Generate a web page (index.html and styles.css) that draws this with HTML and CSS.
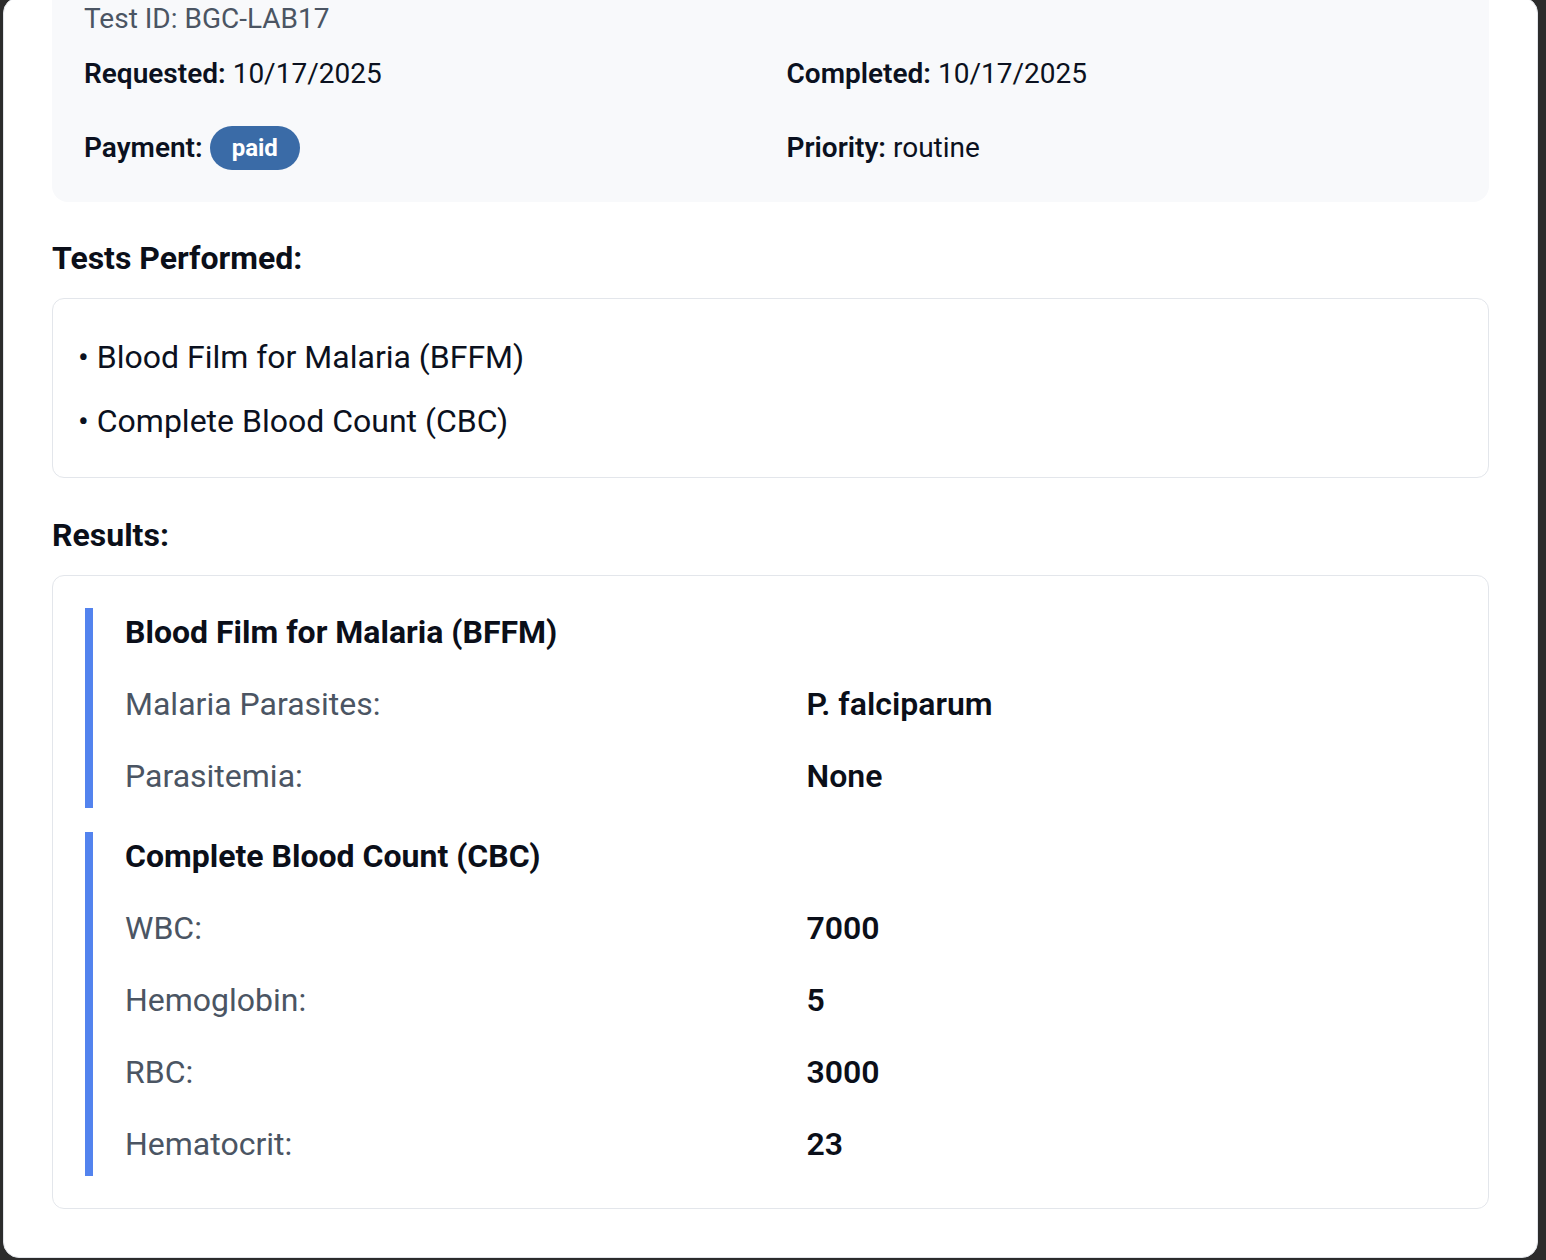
FILE: index.html
```html
<!DOCTYPE html>
<html lang="en">
<head>
<meta charset="utf-8">
<title>Lab Test Details</title>
<link rel="stylesheet" href="styles.css">
</head>
<body>
<div class="modal">
  <div class="modal-scroll">
    <section class="info-box">
      <div class="test-id">Test ID: BGC-LAB17</div>
      <div class="info-grid">
        <div class="info-item"><span class="info-label">Requested:</span> 10/17/2025</div>
        <div class="info-item"><span class="info-label">Completed:</span> 10/17/2025</div>
        <div class="info-item"><span class="info-label">Payment:</span> <span class="badge">paid</span></div>
        <div class="info-item"><span class="info-label">Priority:</span> routine</div>
      </div>
    </section>

    <h3 class="section-heading">Tests Performed:</h3>
    <div class="card tests-card">
      <div class="test-item">• Blood Film for Malaria (BFFM)</div>
      <div class="test-item">• Complete Blood Count (CBC)</div>
    </div>

    <h3 class="section-heading results-heading">Results:</h3>
    <div class="card results-card">
      <div class="result-group">
        <h4 class="result-title">Blood Film for Malaria (BFFM)</h4>
        <div class="result-row"><span class="result-label">Malaria Parasites:</span><span class="result-value">P. falciparum</span></div>
        <div class="result-row"><span class="result-label">Parasitemia:</span><span class="result-value">None</span></div>
      </div>
      <div class="result-group">
        <h4 class="result-title">Complete Blood Count (CBC)</h4>
        <div class="result-row"><span class="result-label">WBC:</span><span class="result-value">7000</span></div>
        <div class="result-row"><span class="result-label">Hemoglobin:</span><span class="result-value">5</span></div>
        <div class="result-row"><span class="result-label">RBC:</span><span class="result-value">3000</span></div>
        <div class="result-row"><span class="result-label">Hematocrit:</span><span class="result-value">23</span></div>
      </div>
    </div>
  </div>
</div>
</body>
</html>
```

FILE: styles.css
```css
html, body {
  margin: 0;
  padding: 0;
}

body {
  background: #2c2c2c;
  font-family: Roboto, "Noto Sans", "Liberation Sans", sans-serif;
  color: #0b1120;
  overflow: hidden;
  height: 1260px;
}

.modal {
  margin: -3px 8px 0 3px;
  background: #ffffff;
  border: 1px solid #e2e5ea;
  border-radius: 16px;
  padding: 0 48px 48px 48px;
  overflow: hidden;
}

.modal-scroll {
  margin-top: -32px;
}

.info-box {
  background: #f8f9fb;
  border-radius: 16px;
  padding: 32px;
}

.test-id {
  font-size: 28px;
  line-height: 42px;
  color: #4b5563;
  margin-bottom: 13px;
}

.info-grid {
  display: grid;
  grid-template-columns: 1fr 1fr;
  column-gap: 32px;
  row-gap: 31px;
  align-items: center;
}

.info-item {
  font-size: 28px;
  line-height: 42px;
  display: flex;
  align-items: center;
  gap: 7px;
  color: #0b1120;
}

.info-label {
  font-weight: 600;
}

.badge {
  display: inline-flex;
  align-items: center;
  height: 44px;
  padding: 0 22px;
  border-radius: 22px;
  background: #3a6ba7;
  color: #ffffff;
  font-size: 24px;
  font-weight: 700;
}

.section-heading {
  margin: 32px 0 16px;
  font-size: 32px;
  line-height: 48px;
  font-weight: 700;
  color: #0b0f19;
}

.results-heading {
  margin-top: 33px;
}

.card {
  border: 1px solid #e3e6eb;
  border-radius: 12px;
  background: #ffffff;
}

.tests-card {
  padding: 34px 25px 32px;
  display: flex;
  flex-direction: column;
  gap: 16px;
}

.test-item {
  font-size: 32px;
  line-height: 48px;
  color: #0b1120;
}

.results-card {
  padding: 32px;
  display: flex;
  flex-direction: column;
  gap: 24px;
}

.result-group {
  border-left: 8px solid #5383ee;
  padding: 0 0 8px 32px;
  display: flex;
  flex-direction: column;
  gap: 24px;
}

.result-title {
  margin: 0;
  font-size: 32px;
  line-height: 48px;
  font-weight: 700;
  color: #0b0f19;
}

.result-row {
  display: grid;
  grid-template-columns: 1fr 1fr;
  column-gap: 32px;
  font-size: 32px;
  line-height: 48px;
}

.result-label {
  color: #4b5563;
}

.result-value {
  font-weight: 600;
  color: #0b0f19;
}
```
